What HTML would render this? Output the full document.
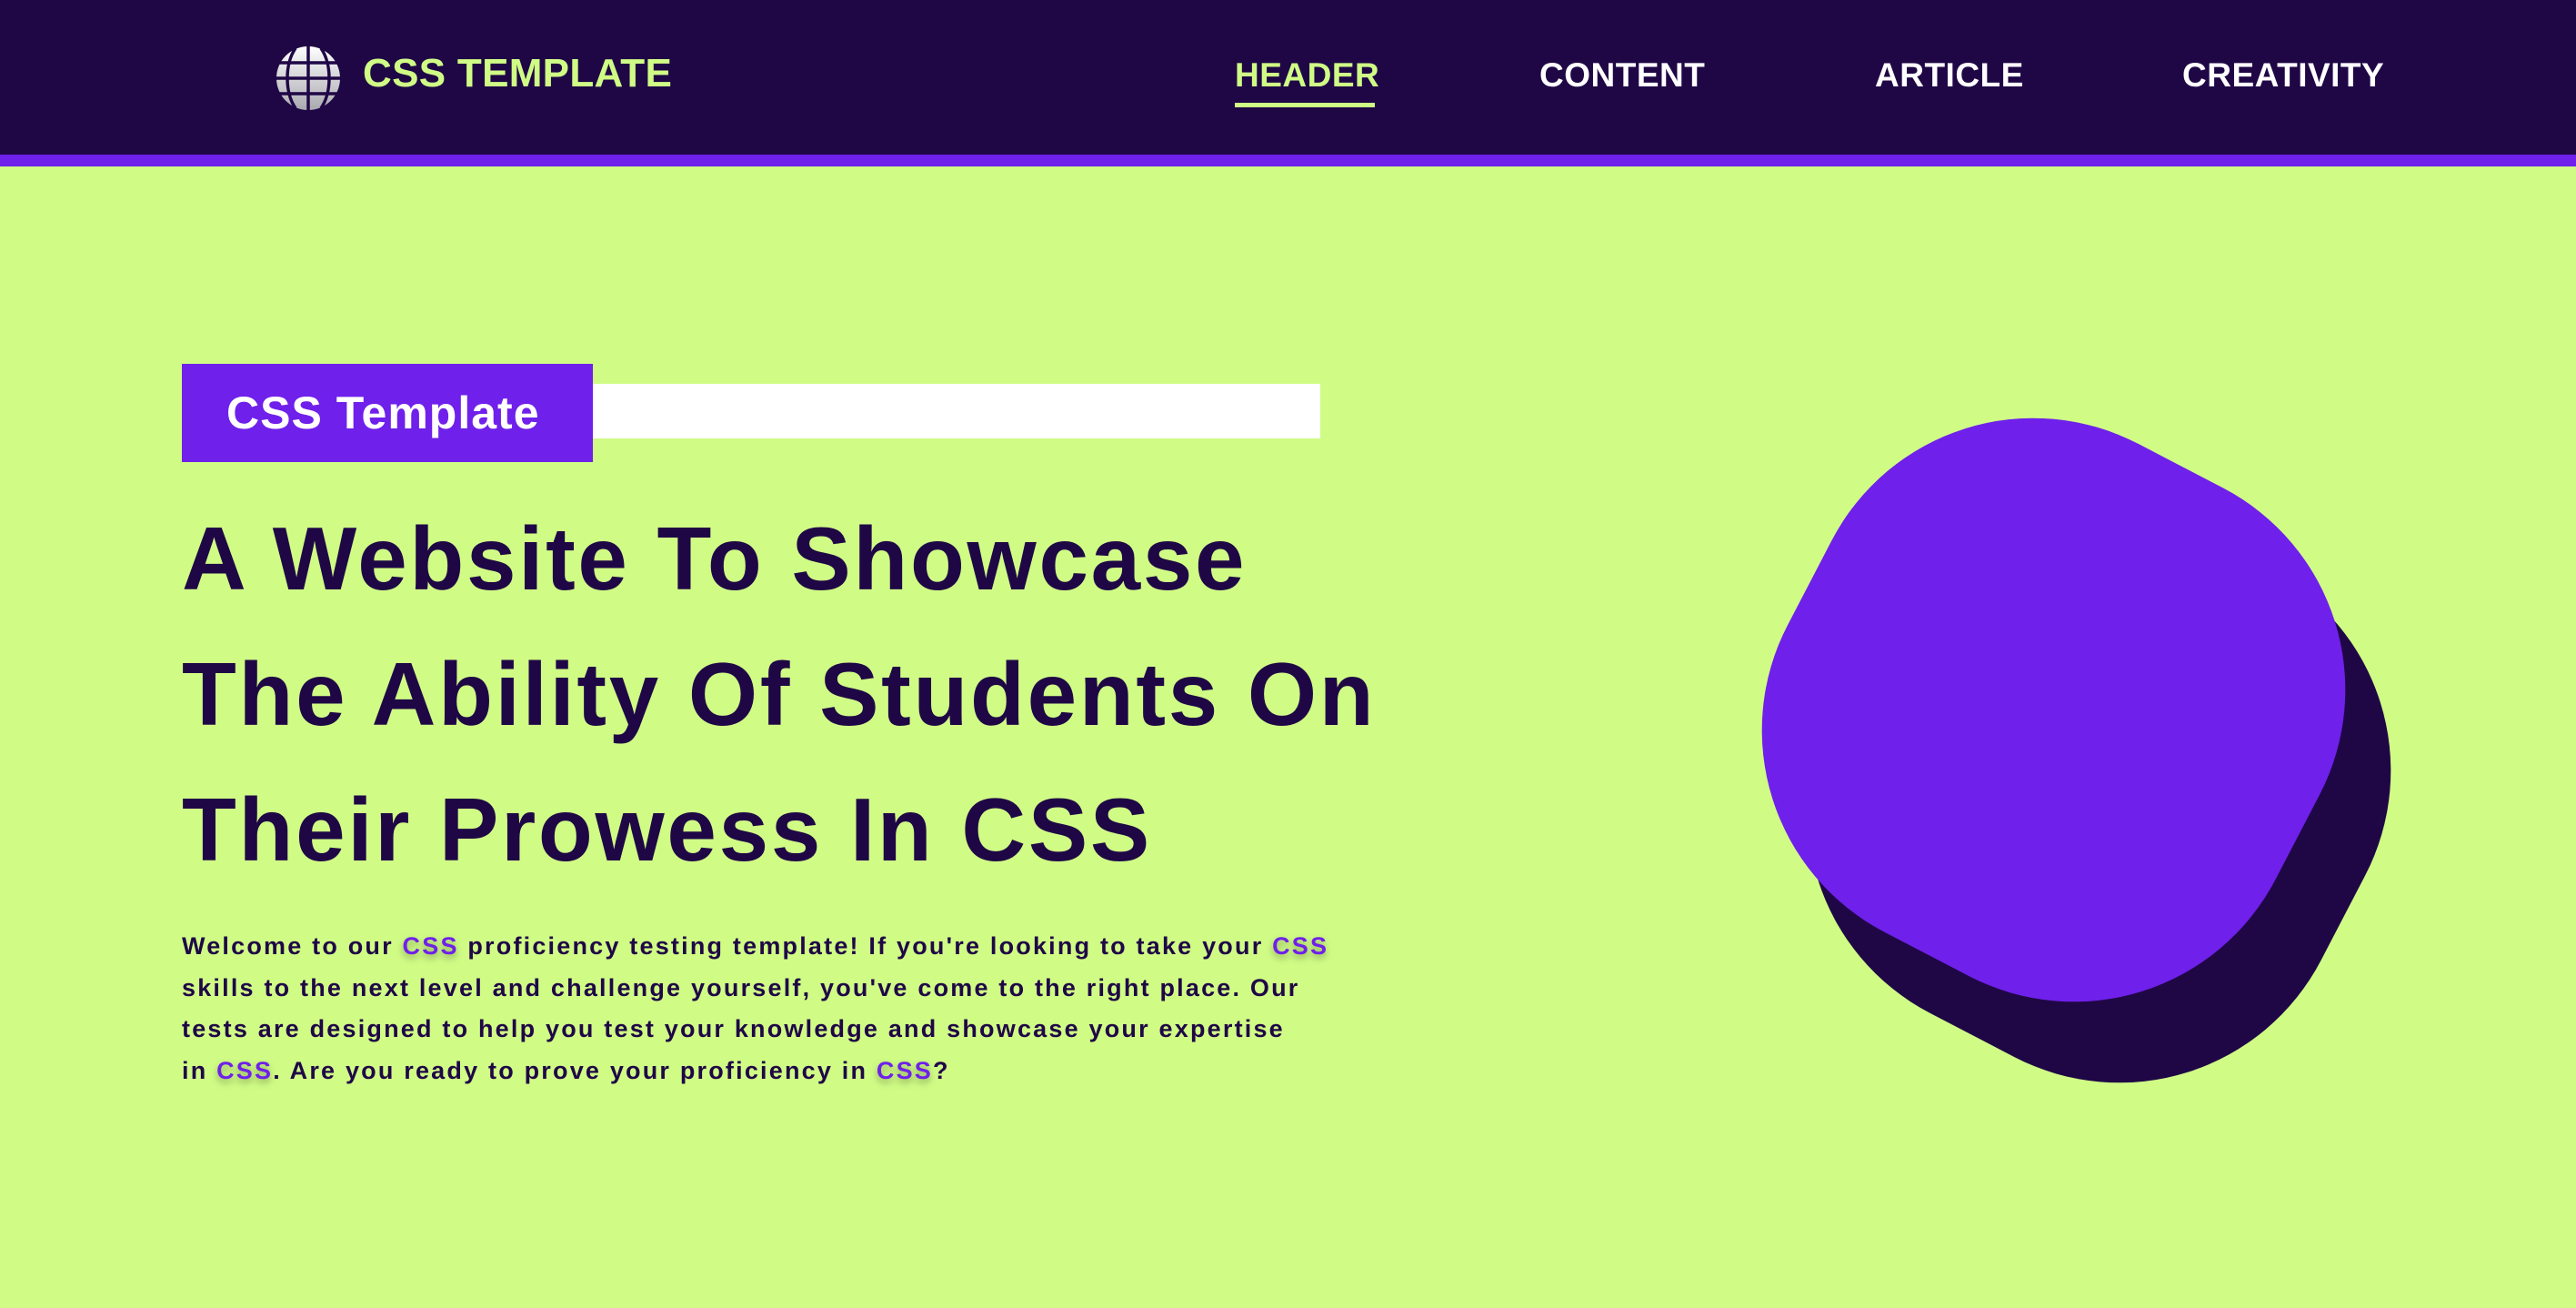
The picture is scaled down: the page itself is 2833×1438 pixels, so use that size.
<!DOCTYPE html>
<html><head><meta charset="utf-8"><style>
*{margin:0;padding:0;box-sizing:border-box}
body{width:2833px;height:1438px;background:#d0fc86;position:relative;overflow:hidden;font-family:"Liberation Sans",sans-serif}
.hdr{position:absolute;left:0;top:0;width:2833px;height:170px;background:#1f0746}
.line{position:absolute;left:0;top:170px;width:2833px;height:13px;background:#6f20ea}
.logo{position:absolute;left:399px;top:56px;font-size:44px;font-weight:bold;color:#d0fc86;letter-spacing:0.3px}
.nav{position:absolute;top:62px;font-size:37px;font-weight:bold;color:#fff;letter-spacing:0.5px}
.ul{position:absolute;left:1358px;top:113px;width:154px;height:5px;background:#d0fc86}
.tag{position:absolute;left:200px;top:400px;width:452px;height:108px;background:#6f20ea;color:#fff;font-size:50px;font-weight:bold;line-height:108px;padding-left:49px;letter-spacing:1px}
.bar{position:absolute;left:652px;top:422px;width:800px;height:60px;background:#fff}
h1{position:absolute;left:200px;top:540px;font-size:98px;line-height:149px;color:#1f0746;font-weight:bold;letter-spacing:2.7px;white-space:nowrap}
p{position:absolute;left:200px;top:1018px;font-size:27px;line-height:45.7px;color:#1f0746;font-weight:bold;letter-spacing:2.2px;white-space:nowrap}
p b{color:#6f20ea;text-shadow:0 4px 8px rgba(0,0,0,0.35)}
.blob{position:absolute;width:605px;height:605px;border-radius:250px;transform:rotate(27.5deg)}
</style></head><body>
<div class="hdr"></div>
<div class="line"></div>
<svg style="position:absolute;left:303px;top:50px" width="72" height="72" viewBox="0 0 72 72">
<defs><linearGradient id="g" x1="0" y1="0" x2="0" y2="1"><stop offset="0" stop-color="#ffffff"/><stop offset="1" stop-color="#a9a9b0"/></linearGradient></defs>
<circle cx="36" cy="36" r="35" fill="url(#g)"/>
<g stroke="#1f0746" stroke-width="3.5" fill="none">
<path d="M36 1V71"/><path d="M1 19H71M1 36H71M1 53H71"/>
<path d="M22 3C10 20 10 52 22 69"/><path d="M50 3C62 20 62 52 50 69"/>
</g></svg>
<div class="logo">CSS TEMPLATE</div>
<div class="nav" style="left:1358px;color:#d0fc86">HEADER</div>
<div class="ul"></div>
<div class="nav" style="left:1693px">CONTENT</div>
<div class="nav" style="left:2062px">ARTICLE</div>
<div class="nav" style="left:2400px">CREATIVITY</div>
<div class="tag">CSS Template</div>
<div class="bar"></div>
<h1>A Website To Showcase<br>The Ability Of Students On<br>Their Prowess In CSS</h1>
<p>Welcome to our <b>CSS</b> proficiency testing template! If you're looking to take your <b>CSS</b><br>skills to the next level and challenge yourself, you've come to the right place. Our<br>tests are designed to help you test your knowledge and showcase your expertise<br>in <b>CSS</b>. Are you ready to prove your proficiency in <b>CSS</b>?</p>
<div class="blob" style="left:2006px;top:567px;background:#1f0746"></div>
<div class="blob" style="left:1956px;top:478px;background:#6f20ea"></div>
</body></html>
